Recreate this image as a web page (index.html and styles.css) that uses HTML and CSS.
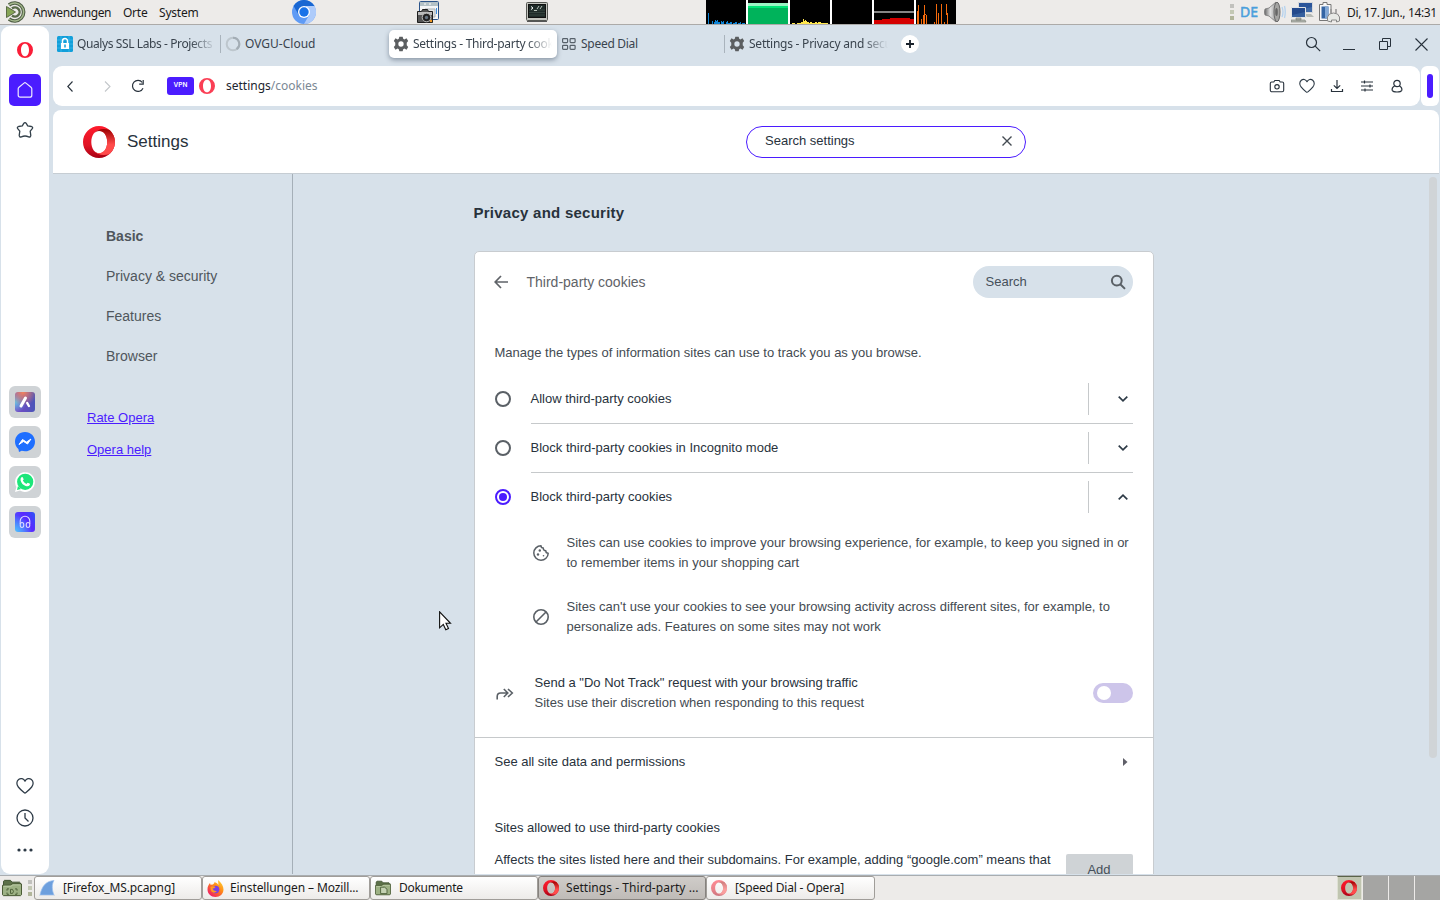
FILE: index.html
```html
<!DOCTYPE html>
<html lang="de">
<head>
<meta charset="utf-8">
<title>Settings - Third-party cookies</title>
<link rel="stylesheet" href="styles.css">
</head>
<body>
<svg class="defs" width="0" height="0" aria-hidden="true">
  <defs>
    <linearGradient id="op-a" x1="0" y1="0" x2="0" y2="1"><stop offset="0" stop-color="#ff1b2d"/><stop offset=".6" stop-color="#e01425"/><stop offset="1" stop-color="#a70014"/></linearGradient>
    <linearGradient id="op-b" x1="0" y1="0" x2="0" y2="1"><stop offset="0" stop-color="#9c0000"/><stop offset=".6" stop-color="#ff4b4b"/><stop offset="1" stop-color="#ff4b4b"/></linearGradient>
    <symbol id="opera" viewBox="0 0 32 32">
      <path fill="url(#op-a)" fill-rule="evenodd" d="M16 0a16 16 0 1 0 0 32a16 16 0 1 0 0-32zM16.300 4.500c4.500 0 7.900 5 7.900 11.500s-3.400 11.500-7.900 11.500S8.300 22.500 8.300 16S11.800 4.500 16.300 4.500z"/>
      <path fill="url(#op-b)" d="M10.700 7.500C14 3.500 20 1.500 26.600 4A16 16 0 0 1 26.600 28C20 30.500 14 28.500 10.700 24.500c5 5.500 13.500 2 13.500-8.500S15.700 2 10.700 7.500z"/>
    </symbol>
    <symbol id="opera-flat" viewBox="0 0 16 16">
      <path fill="#fa1e38" fill-rule="evenodd" d="M8 0a8 8 0 1 0 0 16A8 8 0 1 0 8 0zM8 1.700c2.500 0 4 2.700 4 6.300S10.500 14.300 8 14.300S4 11.600 4 8S5.500 1.700 8 1.700z"/>
    </symbol>
    <symbol id="gear" viewBox="0 0 24 24">
      <path fill="#5b5e60" fill-rule="evenodd" d="M9.500 1h5l.8 3.200 1.700.9L20.300 3.500l2.500 4.100L20.600 10v4l2.200 2.400-2.500 4.100L17 18.900l-1.700.9-.8 3.200h-5l-.8-3.200-1.700-.9-3.300 1.600-2.500-4.100L3.400 14v-4L1.200 7.600l2.500-4.100L7 5.100l1.700-.9zM12 8a4 4 0 1 0 0 8a4 4 0 1 0 0-8z"/>
    </symbol>
    <symbol id="heart" viewBox="0 0 18 18">
      <path fill="none" stroke="#2d3a46" stroke-width="1.250" stroke-linejoin="round" d="M9 4.200C7.800 1.300 4.500.9 2.600 2.500C.4 4.300.3 7.600 2.300 10c1.800 2.200 4 4.200 5.700 5.600q1 .8 2 0c1.700-1.400 3.900-3.400 5.700-5.600c2-2.400 1.900-5.700-.3-7.500C13.500.9 10.200 1.300 9 4.200z"/>
    </symbol>
    <symbol id="folder" viewBox="0 0 20 20">
      <path fill="#5c7048" stroke="#3f5130" d="M1.500 17.500v-15l1-1h6l1.500 2h7.500l1 1v13z"/>
      <path fill="#9db184" stroke="#44552f" d="M.5 7l8-.2L10 5.500h9.500v12l-1 1h-17l-1-1z"/>
      <path fill="none" stroke="#c0cfac" d="M1.500 8h8l1-1.500h8"/>
    </symbol>
  </defs>
</svg>

<header class="panel">
  <svg class="mate" width="20" height="22" viewBox="0 0 20 22"><path d="M3 4A9 9 0 1 1 3 18" fill="none" stroke="#4f5e45" stroke-width="3.600"/><path d="M3 4A9 9 0 1 1 3 18" fill="none" stroke="#a5b98d" stroke-width="1.400"/><path d="M6 7.500a4.600 4.600 0 1 1 0 7" fill="none" stroke="#596b49" stroke-width="2.400"/><path d="M.5 5.500l9 5.500-9 5.500z" fill="#87a556" stroke="#5b6b45"/></svg>
  <span class="menu m-app">Anwendungen</span><span class="menu m-orte">Orte</span><span class="menu m-sys">System</span>
  <svg class="launch-chromium" width="24" height="24" viewBox="0 0 24 24"><circle cx="12" cy="12" r="12" fill="#5f9bf5"/><path d="M1.600 6A12 12 0 0 1 22.400 6H12z" fill="#1967d2"/><path d="M1.600 6l5.200 9L12 6z" fill="#1967d2"/><path d="M22.400 6A12 12 0 0 1 12 24l5.200-9L14 6z" fill="#aecbfa"/><circle cx="12" cy="12" r="6" fill="#fff"/><circle cx="12" cy="12" r="4.700" fill="#1a73e8"/></svg>
  <svg class="launch-shot" width="23" height="23" viewBox="0 0 23 23"><rect x="2.500" y=".5" width="19" height="18" rx="1" fill="#f4f6f7" stroke="#2b548a"/><path d="M3 1h18v4H3z" fill="#b3c1c6"/><path d="M8 2v2m5-2v2" stroke="#fff"/><path d="M8 8h10v8H8z" fill="#e1e4e5" stroke="#a8b0b4"/><path d="M19.500 7v6" stroke="#3e8fe0"/><path d="M.5 10.500h4l1-2h5l1 2h4v11H.5z" fill="#555" stroke="#1d1d1d"/><path d="M1 11h14v3H1z" fill="#bbb"/><circle cx="9.500" cy="16.500" r="4.300" fill="#222" stroke="#bbb"/><circle cx="9.500" cy="16.500" r="1.700" fill="#657381"/><circle cx="14" cy="20" r="1.200" fill="#f49b22"/></svg>
  <svg class="launch-term" width="22" height="20" viewBox="0 0 22 20"><rect x=".5" y=".5" width="21" height="18" rx="1" fill="#c3c5bf" stroke="#555753"/><rect x="2.500" y="2.500" width="17" height="13" fill="#1e2a28" stroke="#111"/><path d="M3 8h16M3 10.500h16M3 13h16" stroke="#35443f"/><path d="M5 4.500l2 1.500-2 1.500" fill="none" stroke="#fff"/><path d="M8 8.500h3M11 7l2-3M14 7l2-3" stroke="#bbc5bd"/><path d="M1 19.500h20" stroke="#555"/></svg>
  <svg class="monitor" width="251" height="24" viewBox="0 0 251 24" shape-rendering="crispEdges">
    <path fill="#fff" d="M40 0h2v24h-2zM82 0h2v24h-2zM124 0h2v24h-2zM166 0h2v24h-2zM208 0h2v24h-2z"/>
    <rect width="40" height="24"/><rect x="42" width="40" height="24"/><rect x="84" width="40" height="24"/><rect x="126" width="40" height="24"/><rect x="168" width="40" height="24"/><rect x="210" width="40" height="24"/>
    <path fill="#0b82d4" d="M2 13h1v11H2zM6 21h1v3H6zM8 22h1v-2h1v1h1v-1h1v2h2v2H8zM15 21h1v1h1v-1h1v3h-3zM20 22h1v-1h1v2h2v-1h2v2h-6zM27 23h2v-1h2v2h-4zM32 23h2v-1h1v2h-3zM36 23h3v1h-3z"/>
    <path fill="#00b35b" d="M42 8h40v16H42z"/><path fill="#00e676" d="M42 6h40v2H42z"/><path fill="#9bf5c4" d="M42 3h40v3H42z"/>
    <path fill="#ffe74d" d="M86 23h3v1h-3zM91 23h4v-1h2v-3h1v2h1v-1h1v1h1v1h2v1h1v-1h2v1h3v-1h2v1h1v-1h3v1h5v1H91zM120 23h2v1h-2z"/>
    <path fill="#858585" d="M168 11h40v2h-40z"/><path fill="#d50000" d="M168 20h8v-1h8v-1h20v1h4v5h-40z"/>
    <path fill="#f46a0c" d="M211 11h1V5h1v19h-2zM215 19h1v5h-1zM217 15h1V5h1v9h1v1h1v9h-1v-9h-1v9h-2zM228 22h1v2h-1zM230 4h1v20h-1zM232 13h1v11h-1zM235 4h1v20h-1zM238 22h1v2h-1zM240 4h1v9h1v11h-1v-9h-1z"/>
  </svg>
  <svg class="grip" width="4" height="16" viewBox="0 0 4 16"><path d="M0 0h4v4H0z" fill="#c1c1bd"/><path d="M0 6h4v4H0z" fill="#c3c8b4"/><path d="M0 12h4v4H0z" fill="#b1b59a"/></svg>
  <span class="kbd">DE</span>
  <svg class="vol" width="22" height="22" viewBox="0 0 22 22"><defs><linearGradient id="spk"><stop stop-color="#666"/><stop offset=".4" stop-color="#e2e2e2"/><stop offset="1" stop-color="#777"/></linearGradient></defs><path d="M1 8l4-1 7-6c4 3 4 17 0 20l-7-6-4-1q-1-3 0-6z" fill="url(#spk)" stroke="#777" stroke-width=".8"/><ellipse cx="13" cy="11" rx="3" ry="9.800" fill="#a5a5a3" stroke="#6a6a6a"/><ellipse cx="12.500" cy="11" rx="1.300" ry="4" fill="#666"/><path d="M18 6q2 5 0 10M20.500 5q1.500 6 0 12" fill="none" stroke="#b5d2ee" stroke-width="1.300"/></svg>
  <svg class="net" width="23" height="22" viewBox="0 0 23 22"><path d="M7.500 1.500h14v10h-14z" fill="#416ba8" stroke="#d7d9db"/><path d="M8 2h13v4l-13 3z" fill="#2b559a"/><path d="M13 13h7l3 3h-7z" fill="#b6bab5"/><path d="M.5 6.500h14v10H.5z" fill="#355f9e" stroke="#e1e3e4"/><path d="M1 7h13v4L1 14z" fill="#23498c"/><path d="M5 17h5v2H5zM0 19h14l1 2H0z" fill="#b6bab3" stroke="#777b74" stroke-width=".6"/></svg>
  <svg class="batt" width="22" height="23" viewBox="0 0 22 23"><path d="M1.500 3.500H5v-2h4v2h4v16H1.500z" fill="#f8f8f8" stroke="#777"/><path d="M3.500 5.500h7v12h-7z" fill="#3465a4"/><path d="M7 5.500h3.500v12H7z" fill="#83a8d5"/><path d="M13 12V8m5 4V8" stroke="#999" stroke-width="1.600"/><path d="M9.500 20v-4q1-4 6-4t6 4v4l-3 1v-2h-5v2z" fill="#e7e9e6" stroke="#888"/></svg>
  <span class="menu clock">Di, 17. Jun., 14:31</span>
</header>

<div class="browser">
  <aside class="side">
    <svg width="16" height="16" class="s-logo"><use href="#opera-flat"/></svg>
    <span class="s-home"><svg width="16" height="18" viewBox="0 0 16 18"><path d="M1.200 7.800Q1.200 6.900 2 6.200L7 2.100q1-.8 2 0l5 4.100q.8.700.8 1.600v6.400q0 2-2 2H3.200q-2 0-2-2z" fill="none" stroke="#eeeaff" stroke-width="1.200"/></svg></span>
    <svg class="s-star" width="18" height="18" viewBox="0 0 18 18"><path d="M7.600 2.700Q9 .4 10.400 2.700L11.700 4.900l3.700.6q2.100.7.700 2.400L14.200 10.200l.6 4.300q-.2 2-2.200 1.300Q9 14.200 5.400 15.800q-2 .7-2.200-1.300L3.800 10.200 1.900 7.900Q.5 6.200 2.600 5.500l3.700-.6z" fill="none" stroke="#33404a" stroke-width="1.300" stroke-linejoin="round"/></svg>
    <div class="apps">
      <span class="app"><i class="tile aria"><svg width="20" height="20" viewBox="0 0 20 20"><path d="M10.500 6L6 14" stroke="#fff" stroke-width="3" stroke-linecap="round"/><path d="M12.200 11l1.700 3" stroke="#fff" stroke-width="2.400" stroke-linecap="round"/></svg></i></span>
      <span class="app"><svg width="20" height="20" viewBox="0 0 20 20"><path d="M10 0C4.300 0 0 4.200 0 9.700c0 3 1.200 5.300 3.400 7.200L4 20l2.700-1.200c1 .3 2.100.5 3.300.5 5.700 0 10-4.200 10-9.600S15.700 0 10 0z" fill="#1f6fff"/><path d="M4 12.500l3.500-5 4 2.600L16 7l-3.500 5-4-2.600z" fill="#fff" stroke="#fff" stroke-linejoin="round"/></svg></span>
      <span class="app"><svg width="20" height="20" viewBox="0 0 20 20"><path d="M0 20l1.400-5A9.900 9.900 0 1 1 5 18.600z" fill="#fff"/><circle cx="10.200" cy="9.800" r="8.100" fill="#1de67a"/><path d="M2 18l1-4 3 3z" fill="#1de67a"/><path d="M6.200 5.500q1-1 1.700 0l.8 1.900-.9 1.200q1.200 2.300 3.600 3.300l1.200-1.200 2 .9q.8.400 0 1.700-1.500 1.700-4 .7-3.900-1.500-5-5.500-.3-2 .6-3z" fill="#fff"/></svg></span>
      <span class="app"><i class="tile player"><svg width="20" height="20" viewBox="0 0 20 20" fill="none" stroke="#dcd8ff" stroke-width="1.100"><path d="M5.200 12V9a4.800 4.800 0 0 1 9.600 0v3"/><ellipse cx="7" cy="13" rx="1.800" ry="2.500"/><ellipse cx="13" cy="13" rx="1.800" ry="2.500"/></svg></i></span>
    </div>
    <div class="s-foot">
      <svg width="18" height="18"><use href="#heart"/></svg>
      <svg width="18" height="18" viewBox="0 0 18 18" fill="none" stroke="#2d3a46" stroke-width="1.300"><circle cx="9" cy="9" r="8"/><path d="M9 4v5l3.500 3.500"/></svg>
      <svg width="18" height="4" viewBox="0 0 18 4" fill="#2d3a46"><circle cx="3" cy="2" r="1.600"/><circle cx="9" cy="2" r="1.600"/><circle cx="15" cy="2" r="1.600"/></svg>
    </div>
  </aside>

  <main class="main">
    <div class="tabs">
      <div class="tab"><svg width="16" height="16" viewBox="0 0 16 16"><rect width="16" height="16" rx="1.500" fill="#119fda"/><path d="M0 4h16M0 8h16M0 12h16M4 0v16M12 0v16" stroke="#45bbeb" stroke-width=".7"/><path d="M5.500 7V5a2.500 2.500 0 0 1 5 0v2" fill="none" stroke="#fff" stroke-width="1.500"/><rect x="4" y="7" width="8" height="6" fill="#fff"/><path d="M8 8.500v3" stroke="#119fda" stroke-width="1.500"/></svg><span class="tl fade t1">Qualys SSL Labs - Projects</span><b class="sep"></b></div>
      <div class="tab"><svg width="16" height="16" viewBox="0 0 16 16" fill="none" stroke-width="2"><circle cx="8" cy="8" r="6.300" stroke="#bdc6cd"/><path d="M8 1.700a6.300 6.300 0 0 1 3.500 11.500" stroke="#a3adb5" /></svg><span class="tl t2">OVGU-Cloud</span></div>
      <div class="tab active"><svg width="16" height="16"><use href="#gear"/></svg><span class="tl fade t3">Settings - Third-party cook</span></div>
      <div class="tab"><svg width="16" height="16" viewBox="0 0 16 16" fill="none" stroke="#57616a" stroke-width="1.200"><rect x="1.600" y="2.600" width="5" height="4" rx=".8"/><rect x="9.100" y="2.600" width="5" height="4" rx=".8"/><rect x="1.600" y="9.300" width="5" height="4" rx=".8"/><rect x="9.100" y="9.300" width="5" height="4" rx=".8"/></svg><span class="tl t4">Speed Dial</span><b class="sep"></b></div>
      <div class="tab"><svg width="16" height="16"><use href="#gear"/></svg><span class="tl fade t5">Settings - Privacy and secu</span></div>
      <span class="plus"><svg width="8" height="8" viewBox="0 0 8 8"><path d="M4 0v8M0 4h8" stroke="#17202a" stroke-width="1.800"/></svg></span>
      <div class="win">
        <svg width="16" height="16" viewBox="0 0 16 16" fill="none" stroke="#28323c" stroke-width="1.200"><circle cx="6.500" cy="6.500" r="5"/><path d="M10.200 10.200l5 5"/></svg>
        <svg width="12" height="12" viewBox="0 0 12 12"><path d="M0 11.500h12" stroke="#28323c"/></svg>
        <svg width="13" height="13" viewBox="0 0 13 13" fill="none" stroke="#28323c"><path d="M.5 3.500h8v8h-8zM3.500 3.500v-3h8v8h-3"/></svg>
        <svg width="13" height="13" viewBox="0 0 13 13"><path d="M.5.5l12 12M12.500.5l-12 12" stroke="#28323c" stroke-width="1.100"/></svg>
      </div>
    </div>

    <div class="bar-row">
      <div class="address">
        <svg class="a-back" width="7" height="11" viewBox="0 0 7 11"><path d="M5.500.5L.8 5.500l4.700 5" fill="none" stroke="#28323c" stroke-width="1.100"/></svg>
        <svg class="a-fwd" width="7" height="11" viewBox="0 0 7 11"><path d="M1 .5l5 5-5 5" fill="none" stroke="#c3c7ca" stroke-width="1.100"/></svg>
        <svg class="a-reload" width="14" height="14" viewBox="0 0 14 14"><path d="M12 9.200A5.500 5.500 0 1 1 11.300 3.500" fill="none" stroke="#28323c" stroke-width="1.200"/><path d="M12.200 1v4.200H8.200" fill="none" stroke="#28323c" stroke-width="1.200"/></svg>
        <span class="vpn">VPN</span>
        <svg class="a-opera" width="16" height="16"><use href="#opera-flat"/></svg>
        <span class="url">settings<em>/cookies</em></span>
        <div class="tools">
          <svg width="16" height="16" viewBox="0 0 16 16" fill="none" stroke="#28323c" stroke-width="1.100"><path d="M1.300 5.500q0-1.500 1.500-1.500h2l1-1.500h4.400l1 1.500h2q1.500 0 1.500 1.500v6.700q0 1.500-1.500 1.500H2.800q-1.500 0-1.500-1.500z"/><circle cx="8" cy="8.800" r="2.200"/></svg>
          <svg width="16" height="16"><use href="#heart"/></svg>
          <svg width="16" height="16" viewBox="0 0 16 16" fill="none" stroke="#28323c" stroke-width="1.200"><path d="M8 2v8.500M4.800 7.300L8 10.500l3.200-3.200M2.500 11v2.500h11V11"/></svg>
          <svg width="16" height="16" viewBox="0 0 16 16" fill="none" stroke="#28323c" stroke-width="1.200"><path d="M2 4h12M2 8h12M2 12h12M5.500 2.500v3M11 6.500v3M6 10.500v3"/></svg>
          <svg width="16" height="16" viewBox="0 0 16 16" fill="none" stroke="#28323c" stroke-width="1.200"><circle cx="8" cy="5.500" r="3.200"/><path d="M5.600 8C3 9.500 2.800 11 3.300 12.500Q4 14 8 14t4.700-1.500C13.200 11 13 9.500 10.400 8"/></svg>
        </div>
      </div>
      <div class="easy"><i></i></div>
    </div>

    <div class="page">
      <div class="head">
        <svg width="32" height="32"><use href="#opera"/></svg>
        <h1>Settings</h1>
        <div class="find"><span>Search settings</span><svg width="10" height="10" viewBox="0 0 10 10"><path d="M.5.5l9 9M9.500.5l-9 9" stroke="#444b52" stroke-width="1.400"/></svg></div>
      </div>
      <div class="body">
        <nav class="nav">
          <a class="on">Basic</a><a>Privacy &amp; security</a><a>Features</a><a>Browser</a>
          <div class="links"><u>Rate Opera</u><u>Opera help</u></div>
        </nav>
        <section class="content">
          <h2>Privacy and security</h2>
          <div class="card">
            <div class="c-head">
              <svg width="14" height="14" viewBox="0 0 14 14" fill="none" stroke="#5f6368" stroke-width="1.700"><path d="M14 7H1.500M7 1L1.200 7 7 13"/></svg>
              <span class="c-title">Third-party cookies</span>
              <div class="c-search"><span>Search</span><svg width="16" height="16" viewBox="0 0 16 16" fill="none" stroke="#5a6066" stroke-width="2"><circle cx="6.800" cy="6.600" r="4.900"/><path d="M10.300 10.200l4.700 4.700"/></svg></div>
            </div>
            <p class="intro">Manage the types of information sites can use to track you as you browse.</p>
            <div class="opt"><i class="radio"></i><div class="o-row"><span>Allow third-party cookies</span><b class="exp"><svg width="10" height="6" viewBox="0 0 10 6"><path d="M.7.7L5 4.800 9.300.7" fill="none" stroke="#2d3a46" stroke-width="1.700"/></svg></b></div></div>
            <div class="opt"><i class="radio"></i><div class="o-row"><span>Block third-party cookies in Incognito mode</span><b class="exp"><svg width="10" height="6" viewBox="0 0 10 6"><path d="M.7.7L5 4.800 9.300.7" fill="none" stroke="#2d3a46" stroke-width="1.700"/></svg></b></div></div>
            <div class="opt last"><i class="radio checked"></i><div class="o-row"><span>Block third-party cookies</span><b class="exp"><svg width="10" height="6" viewBox="0 0 10 6"><path d="M.7 5.300L5 1.200l4.300 4.100" fill="none" stroke="#2d3a46" stroke-width="1.700"/></svg></b></div></div>
            <div class="info first"><svg width="16" height="16" viewBox="0 0 16 16"><path d="M8 .8A7.200 7.200 0 1 0 15.200 8.200q-2.400 0-2.400-2.500-2.600 0-2.500-2.600Q8 3 8 .8z" fill="none" stroke="#5a6066" stroke-width="1.500" stroke-linejoin="round"/><g fill="#5a6066"><circle cx="5" cy="9.500" r="1.200"/><circle cx="6.800" cy="5.500" r="1.200"/><circle cx="10.500" cy="10.800" r=".8"/></g></svg><p>Sites can use cookies to improve your browsing experience, for example, to keep you signed in or<br>to remember items in your shopping cart</p></div>
            <div class="info"><svg width="16" height="16" viewBox="0 0 16 16" fill="none" stroke="#5a6066" stroke-width="1.600"><circle cx="8" cy="8" r="7.200"/><path d="M3 13L13 3"/></svg><p>Sites can't use your cookies to see your browsing activity across different sites, for example, to<br>personalize ads. Features on some sites may not work</p></div>
            <div class="dnt"><svg width="18" height="14" viewBox="0 0 18 14" fill="none" stroke="#5a6066" stroke-width="1.600"><path d="M1.200 12.500V9.500q0-3.500 3.500-3.500h7M7.800 2l4 4-4 4M12 2l4.300 4L12 10"/></svg><div><span>Send a "Do Not Track" request with your browsing traffic</span><small>Sites use their discretion when responding to this request</small></div><i class="toggle"></i></div>
            <div class="all"><span>See all site data and permissions</span><svg width="5" height="8" viewBox="0 0 5 8"><path d="M0 0l4.500 4L0 8z" fill="#5f5f68"/></svg></div>
            <div class="allowed">Sites allowed to use third-party cookies</div>
            <div class="add-row"><p>Affects the sites listed here and their subdomains. For example, adding “google.com” means that</p><span class="add">Add</span></div>
          </div>
        </section>
        <i class="scroll"></i>
      </div>
    </div>
  </main>
</div>

<footer class="taskbar">
  <svg class="desk" width="20" height="18" viewBox="0 0 20 20" preserveAspectRatio="none"><use href="#folder"/><path d="M5 11h2m-2 0v2m10-2h-2m2 0v2M5 17h2m-2 0v-2m10 2h-2m2 0v-2" fill="none" stroke="#4d6038"/><path d="M8.500 11.500h2q2 2.500 0 4.500h-2z" fill="none" stroke="#4d6038"/></svg>
  <svg class="grip g2" width="4" height="16" viewBox="0 0 4 16"><path d="M0 0h4v4H0z" fill="#c1c1bd"/><path d="M0 6h4v4H0z" fill="#c3c8b4"/><path d="M0 12h4v4H0z" fill="#b1b59a"/></svg>
  <div class="task"><svg width="16" height="16" viewBox="0 0 16 16"><path d="M1 15C3 6 7 1 15 .5c-2.500 4-2 9.500 0 14.500z" fill="#6d9fdd" stroke="#9cc0ee" stroke-width=".7"/><path d="M0 15.500h16" stroke="#d4dbe6"/></svg><span class="k1">[Firefox_MS.pcapng]</span></div>
  <div class="task"><svg width="17" height="17" viewBox="0 0 17 17"><defs><linearGradient id="ff" x1="1" y1="0" x2=".2" y2="1"><stop stop-color="#ffe13a"/><stop offset=".45" stop-color="#ff8a16"/><stop offset="1" stop-color="#f0156b"/></linearGradient></defs><path d="M11 0c3.500 3 5.500 6 5.500 9.500C16.500 14 13 17 8.500 17S.5 14 .5 9.300C.5 6.500 1.700 4.500 3 3l.5 1.700L6 4.500Q8 2.500 7.500 2q3 1 4 3z" fill="url(#ff)"/><circle cx="8.600" cy="9.500" r="3.700" fill="#7b3fe4"/><path d="M3.500 7q3-1.500 5 0-1.200 1.700-3 1.600 1 3 4.500 2.400Q7 14 4.500 11.500 3.500 10 3.500 7z" fill="#ff9a1f"/></svg><span class="k2">Einstellungen – Mozill...</span></div>
  <div class="task"><svg width="16" height="16" viewBox="0 0 20 20"><use href="#folder"/><path d="M7 9h5l3 2.500V17H7z" fill="#c5d2b4" stroke="#52643f" stroke-width="1.200"/></svg><span class="k3">Dokumente</span></div>
  <div class="task cur"><svg width="16" height="16"><use href="#opera"/></svg><span class="k4">Settings - Third-party ...</span></div>
  <div class="task dim"><svg width="16" height="16"><use href="#opera"/></svg><span class="k5">[Speed Dial - Opera]</span></div>
  <div class="pager"><i class="p-on"><svg width="16" height="16"><use href="#opera"/></svg></i><i></i><i></i><i></i></div>
</footer>

<svg class="cursor" width="13" height="20" viewBox="0 0 13 20"><path d="M.6.800v16l3.700-3.400 2.500 5.400 2.700-1.200L7 12.300h4.500z" fill="#fff" stroke="#111" stroke-width="1.100"/></svg>
</body>
</html>
```
FILE: styles.css
```css
* { box-sizing: border-box; }
html, body { margin: 0; height: 100%; }
body { width: 1440px; height: 900px; overflow: hidden; display: flex; flex-direction: column; background: #d7e1ea; font: 13px/20px "Liberation Sans", Arial, sans-serif; color: #28323c; }
svg { display: block; flex: none; }
.defs { position: absolute; }
p, h1, h2 { margin: 0; }
i, em { font-style: normal; }

/* desktop panel */
.panel { height: 25px; flex: none; display: flex; align-items: center; background: #edebe9; border-bottom: 1px solid #acaaa8; font: 12px/24px "Noto Sans", sans-serif; color: #1a1a1a; white-space: nowrap; }
.mate { margin-left: 6px; }
.menu { flex: none; padding-top: 1px; }
.m-app { margin-left: 7px; width: 90px; letter-spacing: -.4px; }
.m-orte { width: 36px; letter-spacing: -.25px; }
.m-sys { width: 133px; letter-spacing: -.2px; }
.launch-shot { margin-left: 101px; }
.launch-term { margin-left: 86px; }
.monitor { margin-left: 158px; }
.grip { margin-left: 273px; }
.kbd { width: 24px; margin-left: 6px; font-size: 14px; color: #4a9fdc; -webkit-text-stroke: .5px #4a9fdc; }
.vol { margin-left: 0; }
.net { margin-left: 5px; }
.batt { margin-left: 4px; }
.clock { margin-left: 7px; letter-spacing: -.36px; }

/* browser frame */
.browser { height: 850px; flex: none; display: flex; }
.side { width: 48px; height: 847px; margin: 1px 4px 0 1px; flex: none; background: #fff; border-radius: 9px; display: flex; flex-direction: column; align-items: center; }
.side { padding-top: 1px; height: 848px; }
.s-logo { margin-top: 15px; }
.s-home { width: 32px; height: 32px; margin-top: 16px; border-radius: 5px; background: #4b1cff; display: flex; align-items: center; justify-content: center; }
.s-star { margin-top: 15px; }
.apps { margin-top: 247px; display: flex; flex-direction: column; gap: 8px; }
.app { width: 32px; height: 32px; border-radius: 6px; background: #cfd3d6; display: flex; align-items: center; justify-content: center; }
.tile { width: 20px; height: 20px; border-radius: 3px; }
.aria { background: radial-gradient(circle at 40% 0, #f4845a 0, #f4845a00 60%), radial-gradient(circle at 0 50%, #62c6e6 0, #62c6e600 50%), linear-gradient(90deg, #7a48c8, #4a55b8); }
.player { background: radial-gradient(circle at 0 100%, #4fc0ff 0, #4fc0ff00 60%), linear-gradient(60deg, #4567ff, #5a28ff 60%, #2b55f5); }
.s-foot { margin: 238.5px 1px 0 0; display: flex; flex-direction: column; align-items: center; gap: 14px; }
.s-foot svg:last-child { margin: 7px 0 0 1px; }

.main { width: 1387px; display: flex; flex-direction: column; }
.tabs { height: 41px; display: flex; padding-top: 5px; align-items: flex-start; font: 12px/28px "Noto Sans", sans-serif; color: #3a444e; }
.tab { width: 168px; height: 28px; flex: none; display: flex; align-items: center; padding-left: 4px; border-radius: 5px; }
.tab.active { background: #fff; box-shadow: 0 2px 5px #8895a4; }
.tl { width: 139px; margin-left: 4px; white-space: nowrap; }
.fade { -webkit-mask-image: linear-gradient(90deg, #000 82%, transparent 100%); mask-image: linear-gradient(90deg, #000 82%, transparent 100%); }
.t1 { letter-spacing: -.4px; }
.t3 { letter-spacing: -.28px; }
.t4 { letter-spacing: -.28px; }
.t5 { letter-spacing: -.24px; }
.sep { width: 1px; height: 18px; margin-left: 4px; background: #a9b3bc; }
.plus { width: 18px; height: 18px; margin: 5px 0 0 8px; border-radius: 50%; background: #fff; display: flex; align-items: center; justify-content: center; }
.win { margin: 6px 12px 0 auto; display: flex; align-items: center; }
.win svg + svg { margin-left: 23px; }
.win svg:nth-child(2) { margin-left: 22px; }
.win svg:nth-child(3) { margin-left: 24px; }

.bar-row { height: 40px; display: flex; gap: 1px; }
.address { width: 1367px; background: #fff; border-radius: 9px; display: flex; align-items: center; }
.a-back { margin-left: 14px; }
.a-fwd { margin-left: 30px; }
.a-reload { margin-left: 20px; }
.vpn { width: 27px; height: 18px; margin-left: 22px; border-radius: 3px; background: #4b1cff; color: #fff; font: 600 6.500px/17px Inter, sans-serif; text-align: center; }
.a-opera { margin-left: 5px; opacity: .85; }
.url { margin-left: 11px; font: 12px/20px "Noto Sans", sans-serif; color: #1c252e; }
.url em { color: #7b8894; }
.tools { margin: 0 15px 0 auto; display: flex; gap: 14px; }
.easy { width: 18px; background: #fff; border-radius: 6px; display: flex; align-items: center; justify-content: center; }
.easy i { width: 6px; height: 24px; border-radius: 3px; background: #4b1cff; }

/* settings page */
.page { width: 1386px; height: 764px; margin-top: 4px; border-radius: 8px 8px 0 0; overflow: hidden; }
.head { height: 64px; background: #fff; border-bottom: 1px solid #c6cdd3; display: flex; align-items: center; padding-left: 30px; }
.head h1 { width: 619px; margin-left: 12px; font-size: 17px; font-weight: 400; }
.find { width: 280px; height: 32px; border: 1px solid #4b1cff; border-radius: 16px; padding: 0 13px 2px 18px; display: flex; align-items: center; justify-content: space-between; }
.body { height: 700px; display: flex; overflow: hidden; }
.nav { width: 240px; flex: none; border-right: 1px solid #a5afb8; padding: 42px 0 0 34px; font-size: 14px; color: #4f565c; }
.nav a { display: block; height: 40px; line-height: 40px; padding-left: 19px; }
.nav .on { font-weight: 700; }
.links { margin-top: 32px; font-size: 13px; color: #4b1cff; }
.links u { display: block; height: 32px; line-height: 20px; }
.content { width: 680px; margin: 27px 0 0 180.500px; flex: none; }
h2 { height: 50px; font-size: 15px; line-height: 24px; letter-spacing: .25px; }
.card { width: 680px; border: 1px solid #c8ccd0; border-radius: 5px; background: #fff; height: 800px; }
.c-head { height: 60px; padding: 0 20px 0 19px; display: flex; align-items: center; color: #5f6368; }
.c-title { margin-left: 19px; font-size: 14px; }
.c-search { width: 160px; height: 32px; margin-left: auto; border-radius: 16px; background: #d7e1ea; padding: 0 7px 0 13px; display: flex; align-items: center; justify-content: space-between; color: #46505a; }
.intro { margin: 31px 0 12px 20px; color: #444b52; }
.opt { height: 49px; padding: 0 20px; display: flex; }
.radio { width: 16px; height: 16px; margin: 16px 20px 0 0; border: 2px solid #5a6066; border-radius: 50%; flex: none; }
.radio.checked { border-color: #4b1cff; padding: 2px; background: #4b1cff content-box; }
.o-row { flex: 1; height: 49px; border-bottom: 1px solid #c6c9cb; display: flex; align-items: center; justify-content: space-between; }
.opt.last .o-row { border-color: transparent; }
.exp { width: 45px; height: 32px; border-left: 1px solid #c6c9cb; display: flex; align-items: center; padding-left: 29px; }
.info { padding: 0 0 0 58px; margin-top: 24px; display: flex; align-items: center; color: #444b52; }
.info.first { margin-top: 11px; }
.info p { margin-left: 18px; white-space: nowrap; }
.dnt { height: 101px; padding: 36px 20px 0 21px; display: flex; align-items: flex-start; border-bottom: 1px solid #c6c9cb; }
.dnt svg { margin-top: 14px; }
.dnt div { margin-left: 21px; }
.dnt span, .dnt small { display: block; font-size: 13px; line-height: 20px; }
.dnt small { color: #444b52; }
.toggle { width: 40px; height: 20px; margin: 10px 0 0 auto; border-radius: 10px; background: #cdc5ea; padding: 3px 4px; }
.toggle::before { content: ""; display: block; width: 14px; height: 14px; border-radius: 50%; background: #fff; }
.all { height: 48px; padding: 0 25px 0 20px; display: flex; align-items: center; justify-content: space-between; }
.allowed { margin: 32px 0 12px 20px; }
.add-row { padding: 0 20px; display: flex; justify-content: space-between; white-space: nowrap; }
.add { width: 67px; height: 32px; margin-top: 4px; border-radius: 2px; background: #cfd3d6; line-height: 32px; text-align: center; color: #46505a; }
.scroll { width: 8px; height: 581px; margin: 3px 2px 0 auto; border-radius: 4px; background: #d0d4d7; }

/* task bar */
.taskbar { height: 25px; flex: none; display: flex; align-items: flex-start; background: #edebe9; border-top: 1px solid #a9adb0; font: 12px/22px "Noto Sans", sans-serif; color: #1a1a1a; }
.desk { margin: 3px 0 0 2px; }
.g2 { margin: 4px 2px 0 6px; }
.task { width: 168px; height: 24px; flex: none; border: 1px solid #a09d99; border-radius: 3px; background: linear-gradient(#fff, #edebe9); display: flex; align-items: center; padding-left: 4px; white-space: nowrap; }
.task span { margin-left: 8px; }
.task .k1 { letter-spacing: -.12px; }
.task .k2 { margin-left: 6px; letter-spacing: -.12px; }
.task .k3 { letter-spacing: -.3px; }
.task .k4 { margin-left: 7px; letter-spacing: .05px; }
.task .k5 { letter-spacing: -.18px; }
.task.cur { background: linear-gradient(#cfccc9, #bfbbb7); border-color: #86827e; }
.task.dim { width: 169px; }
.task.dim svg { opacity: .5; }
.pager { margin-left: auto; display: flex; gap: 1px; }
.pager i { width: 25px; height: 24px; background: #a5a5a3; }
.pager .p-on { border: 1px solid #dfe1d4; border-top-color: #5a6349; background: #c0c5b0; display: flex; align-items: center; padding-left: 3px; }

.cursor { position: absolute; left: 439px; top: 611px; }
```
